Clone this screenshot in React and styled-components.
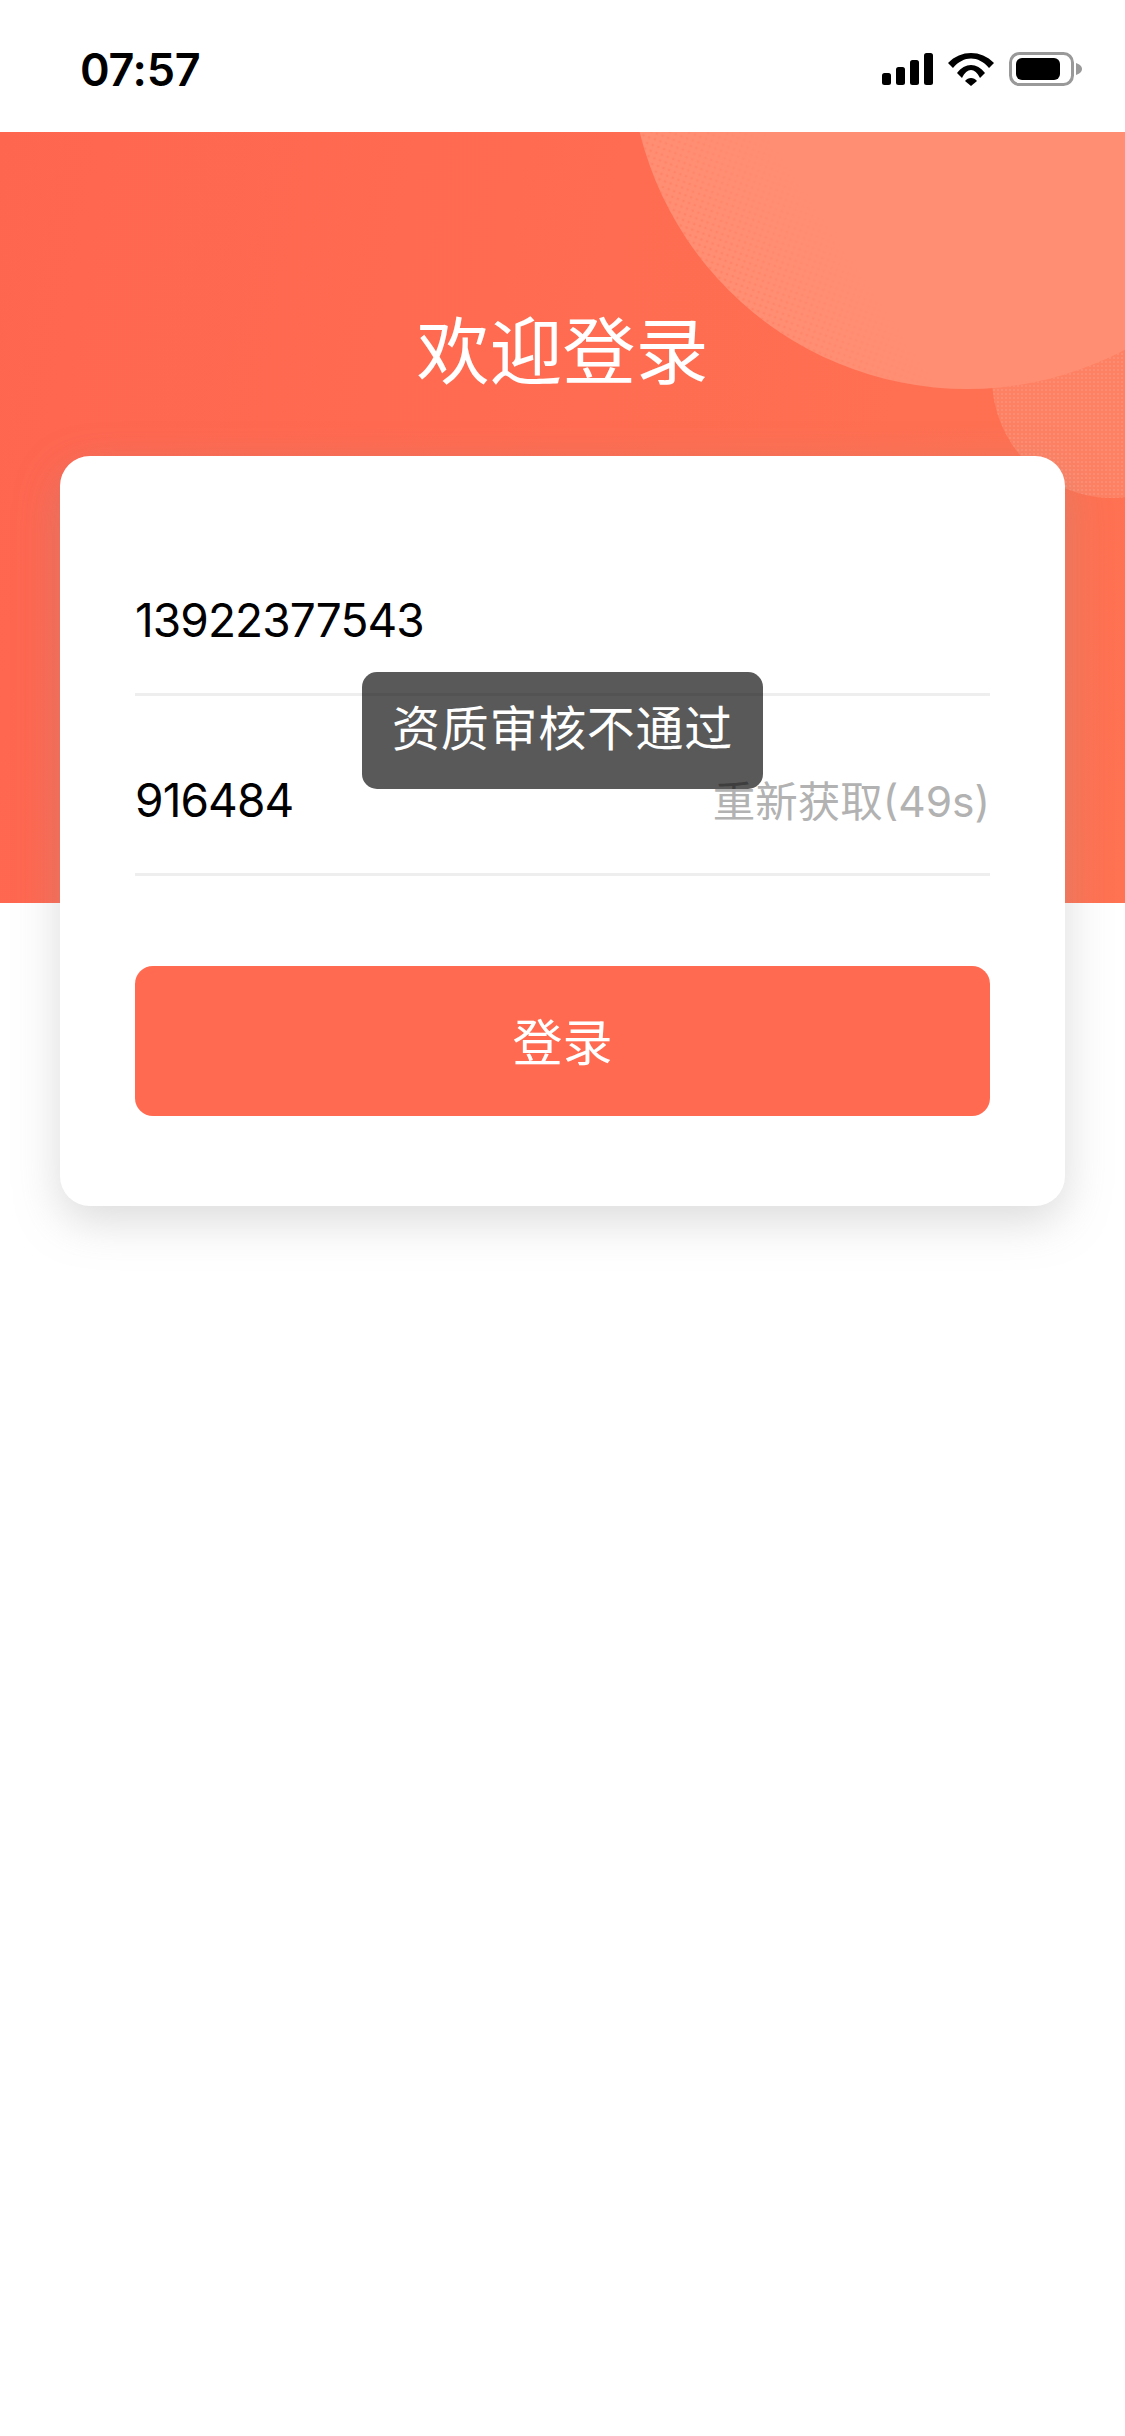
import styled, { createGlobalStyle } from "styled-components";

const GlobalStyle = createGlobalStyle`
  * {
    box-sizing: border-box;
  }
  html, body {
    margin: 0;
    background: #fff;
  }
  body {
    font-family: "Inter", "Noto Sans CJK SC", sans-serif;
  }
`;

const Page = styled.div`
  position: relative;
  min-height: 100vh;
  background: #fff;
`;

const StatusBar = styled.div`
  height: 132px;
  padding: 0 43px 0 80px;
  display: flex;
  align-items: center;
  justify-content: space-between;
`;

const Time = styled.span`
  font-size: 45px;
  font-weight: 600;
  letter-spacing: -0.3px;
  color: #000;
  line-height: 1;
  margin-top: 7px;
`;

const StatusIcons = styled.div`
  display: flex;
  align-items: center;
  gap: 15px;
  margin-top: 6px;
`;

const Hero = styled.div`
  position: relative;
  height: 771px;
  overflow: hidden;
  background: linear-gradient(100deg, #ff6650 0%, #ff7252 100%);
`;

const HeroArt = styled.svg`
  position: absolute;
  left: 0;
  top: 0;
`;

const Title = styled.h1`
  position: relative;
  margin: 0;
  padding-top: 176px;
  font-size: 73px;
  line-height: 88px;
  font-weight: 400;
  color: #fff;
  text-align: center;
`;

const Card = styled.div`
  position: relative;
  margin: -447px 60px 0;
  padding: 60px 75px 90px;
  background: #fff;
  border-radius: 30px;
  box-shadow: 0 15px 45px rgba(150, 150, 150, 0.34);
`;

const Row = styled.div`
  height: 180px;
  padding-top: 30px;
  display: flex;
  align-items: center;
  justify-content: space-between;
  border-bottom: 3px solid #eeeeee;
`;

const Value = styled.span`
  font-size: 46px;
  letter-spacing: -0.9px;
  color: #000;
`;

const Resend = styled.span`
  font-size: 42.5px;
  color: #b2b2b2;
  margin-bottom: 3px;
`;

const LoginButton = styled.button`
  display: block;
  width: 100%;
  height: 150px;
  margin-top: 90px;
  padding: 0 0 5px;
  border: 0;
  border-radius: 18px;
  background: #ff6a50;
  color: #fff;
  font-family: inherit;
  font-size: 50px;
  font-weight: 400;
`;

const Toast = styled.div`
  position: absolute;
  left: 362px;
  top: 672px;
  width: 401px;
  height: 117px;
  padding-bottom: 12px;
  display: flex;
  align-items: center;
  justify-content: center;
  border-radius: 15px;
  background: rgba(0, 0, 0, 0.65);
  color: #fff;
  font-size: 48px;
  letter-spacing: 0.7px;
  font-weight: 400;
  white-space: nowrap;
`;

function SignalIcon() {
  return (
    <svg width="51" height="32" viewBox="0 0 51 32">
      <rect x="0" y="20" width="9" height="12" rx="2.5" fill="#000" />
      <rect x="14" y="14" width="9" height="18" rx="2.5" fill="#000" />
      <rect x="28" y="7" width="9" height="25" rx="2.5" fill="#000" />
      <rect x="42" y="0" width="9" height="32" rx="2.5" fill="#000" />
    </svg>
  );
}

function WifiIcon() {
  return (
    <svg width="46" height="33" viewBox="0 0 46 33">
      <path d="M0 10 C13 -3.300 33 -3.300 46 10 L41 15 C30.500 2.300 15.500 2.300 5 15 Z" fill="#000" />
      <path d="M9 20 C17 9.300 29 9.300 37 20 L32 25 C27 14.300 19 14.300 14 25 Z" fill="#000" />
      <path d="M17 28 C20 24 26 24 29 28 L23 33 Z" fill="#000" />
    </svg>
  );
}

function BatteryIcon() {
  return (
    <svg width="73" height="34" viewBox="0 0 73 34">
      <rect x="1.500" y="1.500" width="62" height="31" rx="9" fill="none" stroke="#999" strokeWidth="3" />
      <rect x="7" y="6" width="44" height="22" rx="6" fill="#000" />
      <path d="M67 11 C70 12 73 14 73 17 C73 20 70 22 67 23 Z" fill="#999" />
    </svg>
  );
}

// dots sit in the page's coordinates, so the circles can be read off the screenshot
function Circles() {
  return (
    <HeroArt width="1125" height="771" viewBox="0 132 1125 771">
      <defs>
        <pattern id="fineDots" width="6" height="6" patternUnits="userSpaceOnUse" patternTransform="rotate(20)">
          <circle cx="3" cy="3" r="1.300" fill="#ff7252" />
        </pattern>
        <pattern id="denseDots" width="4" height="4" patternUnits="userSpaceOnUse">
          <circle cx="2" cy="2" r="1" fill="#ff9278" />
        </pattern>
        <linearGradient id="dotFade" gradientUnits="userSpaceOnUse" x1="833" y1="231" x2="692" y2="326">
          <stop offset="0" stopColor="#fff" stopOpacity="0" />
          <stop offset="1" stopColor="#fff" stopOpacity="0.55" />
        </linearGradient>
        <mask id="dotMask">
          <rect x="0" y="0" width="1125" height="900" fill="url(#dotFade)" />
        </mask>
      </defs>
      <circle cx="1112" cy="378" r="120" fill="#ff8163" />
      <circle cx="1112" cy="378" r="120" fill="url(#denseDots)" />
      <circle cx="967" cy="52" r="337" fill="#ff8e73" />
      <circle cx="967" cy="52" r="337" fill="url(#fineDots)" mask="url(#dotMask)" />
    </HeroArt>
  );
}

export default function App() {
  return (
    <Page>
      <GlobalStyle />
      <StatusBar>
        <Time>07:57</Time>
        <StatusIcons>
          <SignalIcon />
          <WifiIcon />
          <BatteryIcon />
        </StatusIcons>
      </StatusBar>
      <Hero>
        <Circles />
        <Title>欢迎登录</Title>
      </Hero>
      <Card>
        <Row>
          <Value>13922377543</Value>
        </Row>
        <Row>
          <Value>916484</Value>
          <Resend>重新获取(49s)</Resend>
        </Row>
        <LoginButton>登录</LoginButton>
      </Card>
      <Toast>资质审核不通过</Toast>
    </Page>
  );
}
